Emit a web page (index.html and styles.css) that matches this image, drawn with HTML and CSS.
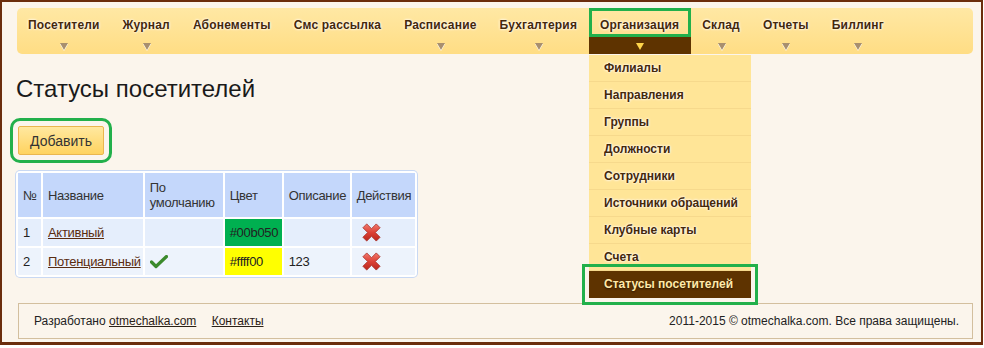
FILE: index.html
```html
<!DOCTYPE html>
<html lang="ru">
<head>
    <meta charset="UTF-8">
    <title>Статусы посетителей</title>
    <link rel="stylesheet" href="styles.css">
</head>
<body>
    <!-- Общий градиент для иконки удаления -->
    <svg class="defs" width="0" height="0">
        <defs>
            <linearGradient id="del-grad" x1="0" y1="0" x2="0" y2="1">
                <stop offset="0" stop-color="#f27a6e"/>
                <stop offset="0.5" stop-color="#dc4136"/>
                <stop offset="1" stop-color="#b8261c"/>
            </linearGradient>
        </defs>
    </svg>

    <div class="frame">
        <!-- Главное меню -->
        <nav class="menu">
            <ul class="menu-list">
                <li class="menu-item"><a class="menu-link" href="#">Посетители</a><span class="menu-arrow"></span></li>
                <li class="menu-item"><a class="menu-link" href="#">Журнал</a><span class="menu-arrow"></span></li>
                <li class="menu-item"><a class="menu-link" href="#">Абонементы</a><span class="menu-arrow empty"></span></li>
                <li class="menu-item"><a class="menu-link" href="#">Смс рассылка</a><span class="menu-arrow empty"></span></li>
                <li class="menu-item"><a class="menu-link" href="#">Расписание</a><span class="menu-arrow"></span></li>
                <li class="menu-item"><a class="menu-link" href="#">Бухгалтерия</a><span class="menu-arrow"></span></li>
                <li class="menu-item active">
                    <a class="menu-link" href="#">Организация</a><span class="menu-arrow"></span>
                    <ul class="submenu">
                        <li><a href="#">Филиалы</a></li>
                        <li><a href="#">Направления</a></li>
                        <li><a href="#">Группы</a></li>
                        <li><a href="#">Должности</a></li>
                        <li><a href="#">Сотрудники</a></li>
                        <li><a href="#">Источники обращений</a></li>
                        <li><a href="#">Клубные карты</a></li>
                        <li><a href="#">Счета</a></li>
                        <li class="current"><a href="#">Статусы посетителей</a></li>
                    </ul>
                </li>
                <li class="menu-item"><a class="menu-link" href="#">Склад</a><span class="menu-arrow"></span></li>
                <li class="menu-item"><a class="menu-link" href="#">Отчеты</a><span class="menu-arrow"></span></li>
                <li class="menu-item"><a class="menu-link" href="#">Биллинг</a><span class="menu-arrow"></span></li>
            </ul>
        </nav>

        <main class="content">
            <h1 class="page-title">Статусы посетителей</h1>
            <div class="toolbar">
                <button class="btn-add" type="button">Добавить</button>
            </div>

            <table class="grid">
                <thead>
                    <tr>
                        <th class="col-num">№</th>
                        <th class="col-name">Название</th>
                        <th class="col-default">По умолчанию</th>
                        <th class="col-color">Цвет</th>
                        <th class="col-desc">Описание</th>
                        <th class="col-actions">Действия</th>
                    </tr>
                </thead>
                <tbody>
                    <tr class="odd">
                        <td>1</td>
                        <td><a href="#">Активный</a></td>
                        <td></td>
                        <td style="background: #00b050">#00b050</td>
                        <td></td>
                        <td>
                            <svg class="icon-del" width="21" height="21" viewBox="0 0 22 22"><polygon points="2,6 6,2 11,7 16,2 20,6 15,11 20,16 16,20 11,15 6,20 2,16 7,11"/></svg>
                        </td>
                    </tr>
                    <tr class="even">
                        <td>2</td>
                        <td><a href="#">Потенциальный</a></td>
                        <td>
                            <svg class="icon-check" width="18" height="14" viewBox="0 0 18 14"><path d="M1.5 7 L6 11.5 L16.5 1.5"/></svg>
                        </td>
                        <td style="background: #ffff00">#ffff00</td>
                        <td>123</td>
                        <td>
                            <svg class="icon-del" width="21" height="21" viewBox="0 0 22 22"><polygon points="2,6 6,2 11,7 16,2 20,6 15,11 20,16 16,20 11,15 6,20 2,16 7,11"/></svg>
                        </td>
                    </tr>
                </tbody>
            </table>
        </main>

        <footer class="footer">
            <div class="footer-left">
                Разработано <a href="#">otmechalka.com</a>
                <a class="footer-contacts" href="#">Контакты</a>
            </div>
            <div class="footer-right">2011-2015 © otmechalka.com. Все права защищены.</div>
        </footer>
    </div>
</body>
</html>
```

FILE: styles.css
```css
:root {
    --brown-dark: #5e3300;
    --brown-text: #45280a;
    --frame: #6b2d0c;
    --paper: #fbf5ec;
    --menu-top: #ffe8a4;
    --menu-bottom: #ffdd84;
    --marker: #22b04b;
    --grid-head: #c4d7fb;
    --grid-row: #e5eefc;
}

* {
    box-sizing: border-box;
}

body {
    margin: 0;
    background: #fff;
    font-family: "Liberation Sans", Arial, sans-serif;
    font-size: 13px;
    color: #222;
}

.defs {
    position: absolute;
    width: 0;
    height: 0;
}

/* Рамка страницы */
.frame {
    width: 983px;
    height: 345px;
    border: 2px solid var(--frame);
    border-bottom-width: 3px;
    background: var(--paper);
    padding: 6px 8px 2px 15px;
}

/* Меню */
.menu {
    height: 46px;
    border-radius: 5px;
    background: linear-gradient(var(--menu-top), var(--menu-bottom));
}

.menu-list {
    display: flex;
    margin: 0;
    padding: 0;
    list-style: none;
}

.menu-item {
    position: relative;
    display: flex;
    flex-direction: column;
}

.menu-link {
    display: block;
    height: 29px;
    padding: 10px 12px 0 11px;
    line-height: 15px;
    font-size: 12px;
    font-weight: bold;
    letter-spacing: 0.18px;
    color: var(--brown-text);
    text-decoration: none;
    text-shadow: 0 0 3px #fff, 0 0 2px #fff;
    white-space: nowrap;
}

.menu-arrow {
    display: flex;
    justify-content: center;
    align-items: center;
    height: 17px;
    padding-top: 1px;
}

.menu-arrow::before {
    content: "";
    border-left: 4px solid transparent;
    border-right: 4px solid transparent;
    border-top: 7px solid #a88f6e;
    filter: drop-shadow(0 1px 0 #fff);
}

.menu-arrow.empty::before {
    display: none;
}

.menu-item.active .menu-link {
    outline: 3px solid var(--marker);
    outline-offset: -3px;
}

.menu-item.active .menu-arrow {
    background: var(--brown-dark);
}

.menu-item.active .menu-arrow::before {
    border-top-color: #ffd54a;
    filter: none;
}

/* Выпадающее меню */
.submenu {
    position: absolute;
    top: 100%;
    left: 0;
    z-index: 10;
    width: 162px;
    margin: 1px 0 0;
    padding: 0;
    list-style: none;
    background: #ffe597;
}

.submenu li {
    height: 27px;
    border-bottom: 1px solid #f6d98c;
}

.submenu a {
    display: block;
    padding-left: 15px;
    line-height: 26px;
    font-size: 12px;
    font-weight: bold;
    color: var(--brown-text);
    text-decoration: none;
    text-shadow: 0 0 3px #fff, 0 0 2px #fff;
    white-space: nowrap;
}

.submenu li.current {
    background: var(--brown-dark);
    border-bottom: 0;
    outline: 3px solid var(--marker);
    outline-offset: 4px;
}

.submenu li.current a {
    line-height: 27px;
    color: #ffe9a8;
    text-shadow: 0 1px 2px #2a1400;
}

/* Контент */
.page-title {
    margin: 22px 0 0 -1px;
    font-size: 24px;
    line-height: 26px;
    font-weight: normal;
    color: #1a1a1a;
}

.toolbar {
    margin-top: 24px;
    padding-left: 1px;
}

.btn-add {
    display: block;
    width: 86px;
    height: 29px;
    padding: 0;
    border: 1px solid #eab64e;
    border-radius: 2px;
    background: linear-gradient(#ffe8a0, #ffd35f);
    font-family: inherit;
    font-size: 14px;
    color: #333;
    outline: 3px solid var(--marker);
    outline-offset: 5px;
}

/* Таблица */
.grid {
    margin: 16px 0 0 -1px;
    border-collapse: separate;
    border-spacing: 2px;
    background: #fff;
    border-radius: 4px;
    box-shadow: 0 0 0 1px #c8d8f3;
    letter-spacing: -0.3px;
}

.grid th {
    height: 44px;
    padding: 0 2px 0 5px;
    background: var(--grid-head);
    font-weight: normal;
    text-align: left;
    line-height: 15px;
    color: #333;
}

.grid td {
    height: 27px;
    padding: 0 2px 0 5px;
    background: var(--grid-row);
    color: #222;
    vertical-align: middle;
}

.grid tr.even td {
    background: #edf3fc;
}

.grid a {
    color: #5a2c10;
}

.col-num { width: 23px; }
.col-name { width: 99px; }
.col-default { width: 78px; }
.col-color { width: 57px; }
.col-desc { width: 66px; }
.col-actions { width: 63px; }

.grid td:last-child {
    padding-left: 9px;
}

.icon-del {
    display: block;
}

.icon-del polygon {
    fill: url(#del-grad);
    stroke: #a3281f;
    stroke-width: 0.8;
}

.icon-check {
    display: block;
}

.icon-check path {
    fill: none;
    stroke: #3b8a2c;
    stroke-width: 3.2;
    stroke-linecap: round;
    stroke-linejoin: round;
}

/* Подвал */
.footer {
    display: flex;
    justify-content: space-between;
    align-items: center;
    height: 36px;
    margin: 26px 0 0 1px;
    padding: 0 13px 0 15px;
    border: 1px solid #d3bf9e;
    font-size: 12px;
    color: #222;
}

.footer a {
    color: #2b2116;
}

.footer-contacts {
    margin-left: 12px;
}
```
